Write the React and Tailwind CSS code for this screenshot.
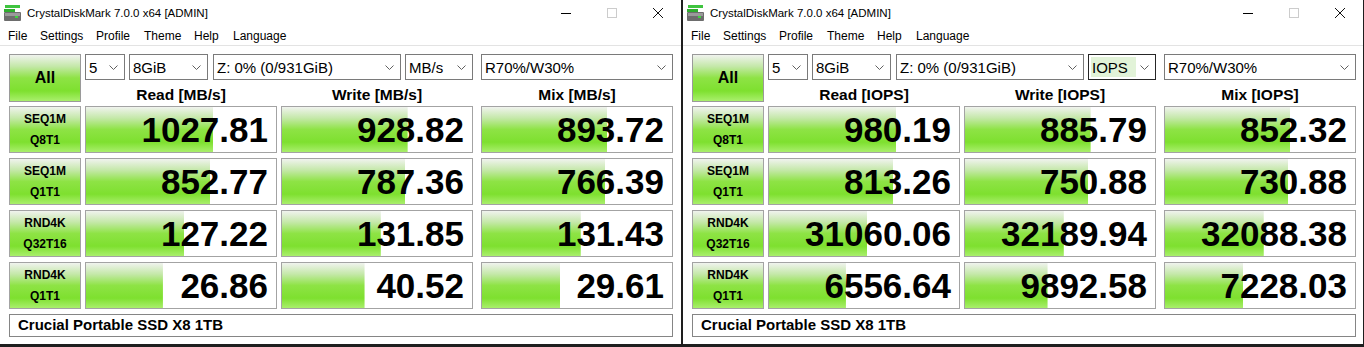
const rows = [
  { l1: "SEQ1M", l2: "Q8T1", mb: [1027.81, 928.82, 893.72], iops: ["980.19", "885.79", "852.32"] },
  { l1: "SEQ1M", l2: "Q1T1", mb: [852.77, 787.36, 766.39], iops: ["813.26", "750.88", "730.88"] },
  { l1: "RND4K", l2: "Q32T16", mb: [127.22, 131.85, 131.43], iops: ["31060.06", "32189.94", "32088.38"] },
  { l1: "RND4K", l2: "Q1T1", mb: [26.86, 40.52, 29.61], iops: ["6556.64", "9892.58", "7228.03"] },
];

const green =
  "bg-[linear-gradient(to_bottom,#f0f3ee_0%,#c4e8a8_25%,#8ee345_50%,#7ee02f_78%,#a9ef6c_100%)]";

// log scale meter, same as CDM
const meter = (mb) => Math.max(0, Math.min(100, 16.667 * Math.log10(mb * 10)));

function Chevron() {
  return (
    <svg width="9" height="5" viewBox="0 0 9 5">
      <path d="M0.5 0.5 L4.5 4.5 L8.5 0.5" fill="none" stroke="#606060" strokeWidth="1" />
    </svg>
  );
}

function AppIcon() {
  return (
    <svg width="18" height="17" viewBox="0 0 18 17">
      <rect x="1" y="0" width="15" height="3" fill="#3fc43f" />
      <rect x="0" y="4" width="11" height="3" fill="#2fae2f" />
      <rect x="0" y="7" width="17" height="9" rx="1" fill="#6d6d6d" />
      <rect x="1" y="8" width="15" height="3" fill="#9a9a9a" />
      <rect x="11" y="11" width="3" height="2" fill="#3fd43f" />
    </svg>
  );
}

function Select({ text, className, focused }) {
  return (
    <div
      className={
        "flex h-[26px] items-center justify-between bg-white pr-[6px] text-[15px] leading-none text-black " +
        (focused ? "border border-[#262626] pl-[2px] " : "border border-[#7a7a7a] pl-[3px] ") +
        className
      }
    >
      {focused ? (
        <span className="flex h-[20px] w-[45px] items-center bg-[#e2f3d8] pl-[1px]">{text}</span>
      ) : (
        <span>{text}</span>
      )}
      <Chevron />
    </div>
  );
}

function Cell({ value, mb, className }) {
  return (
    <div
      className={
        "flex h-[47px] w-[192px] items-center justify-end border border-[#a3a3a3] bg-white bg-no-repeat pr-[8px] text-[35px] font-bold leading-none text-black " +
        green +
        " " +
        className
      }
      style={{ backgroundSize: `${meter(mb)}% 100%` }}
    >
      {value}
    </div>
  );
}

function Window({ unit, iops, className }) {
  return (
    <div className={"flex h-[344px] flex-col bg-white " + className}>
      <div className="flex h-[26px] items-center">
        <div className="ml-[4px] mt-[1px]">
          <AppIcon />
        </div>
        <span className="ml-[5px] mt-[1px] text-[11.5px] text-black">CrystalDiskMark 7.0.0 x64 [ADMIN]</span>
        <div className="ml-auto flex h-full">
          <div className="flex w-[46px] items-center justify-center">
            <div className="h-px w-[10px] bg-black" />
          </div>
          <div className="flex w-[46px] items-center justify-center">
            <div className="h-[10px] w-[10px] border border-[#cccccc]" />
          </div>
          <div className="flex w-[46px] items-center justify-center">
            <svg width="10" height="10" viewBox="0 0 10 10">
              <path d="M0 0 L10 10 M10 0 L0 10" stroke="#111" strokeWidth="1" />
            </svg>
          </div>
        </div>
      </div>
      <div className="flex h-[20px] items-center border-b border-[#e3e3e3] pl-[8px] text-[12px] text-black">
        <span className="w-[32px]">File</span>
        <span className="w-[56px]">Settings</span>
        <span className="w-[48px]">Profile</span>
        <span className="w-[50px]">Theme</span>
        <span className="w-[39px]">Help</span>
        <span>Language</span>
      </div>
      <div className="flex flex-col pl-[9px] pt-[8px]">
        <div className="flex h-[52px]">
          <div
            className={
              "flex h-[48px] w-[72px] items-center justify-center border border-[#9a9a9a] text-[16px] font-bold text-black " +
              green
            }
          >
            All
          </div>
          <div className="ml-[4px] flex flex-col">
            <div className="flex">
              <Select text="5" className="w-[40px]" />
              <Select text="8GiB" className="ml-[4px] w-[79px]" />
              <Select text="Z: 0% (0/931GiB)" className="ml-[5px] w-[188px]" />
              <Select text={unit} className="ml-[4px] w-[68px]" focused={iops} />
              <Select text="R70%/W30%" className="ml-[8px] w-[192px]" />
            </div>
            <div className="flex h-[26px] items-center pt-[3px] text-[15.5px] font-bold text-black">
              <div className="w-[192px] text-center">Read [{unit}]</div>
              <div className="ml-[4px] w-[192px] text-center">Write [{unit}]</div>
              <div className="ml-[8px] w-[192px] text-center">Mix [{unit}]</div>
            </div>
          </div>
        </div>
        <div className="flex flex-col gap-[5px]">
          {rows.map((r, i) => (
            <div key={i} className="flex">
              <div
                className={
                  "flex h-[47px] w-[72px] flex-col items-center justify-center border border-[#a3a3a3] text-[12px] font-bold leading-[21px] text-black " +
                  green
                }
              >
                <span>{r.l1}</span>
                <span>{r.l2}</span>
              </div>
              <Cell className="ml-[4px]" mb={r.mb[0]} value={iops ? r.iops[0] : r.mb[0].toFixed(2)} />
              <Cell className="ml-[4px]" mb={r.mb[1]} value={iops ? r.iops[1] : r.mb[1].toFixed(2)} />
              <Cell className="ml-[8px]" mb={r.mb[2]} value={iops ? r.iops[2] : r.mb[2].toFixed(2)} />
            </div>
          ))}
        </div>
        <div className="mt-[5px] flex h-[23px] w-[664px] items-center border border-[#858585] pl-[8px] text-[15px] font-bold text-black">
          Crucial Portable SSD X8 1TB
        </div>
      </div>
    </div>
  );
}

export default function App() {
  return (
    <div className="flex h-[347px] w-[1364px] gap-[2px] overflow-hidden bg-[#1e1e1e] font-['Liberation_Sans',Arial,sans-serif]">
      <Window unit="MB/s" className="w-[681px]" />
      <Window unit="IOPS" iops className="w-[680px]" />
    </div>
  );
}
